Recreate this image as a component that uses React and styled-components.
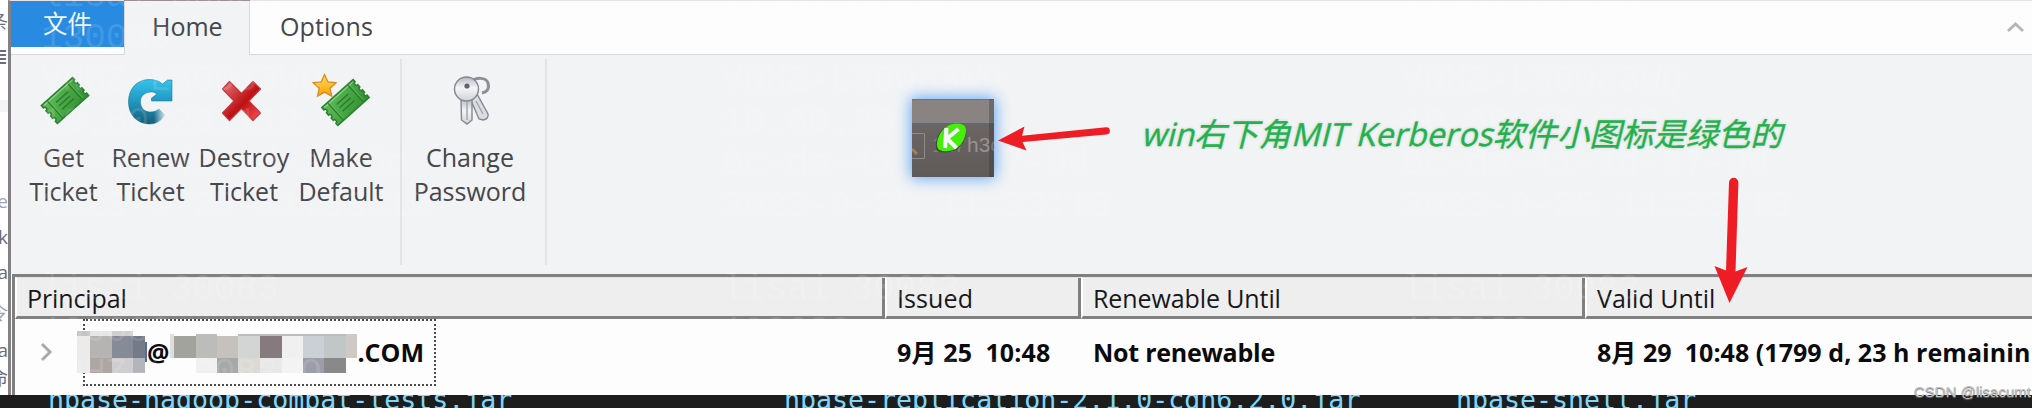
import React from "react";
import styled, { createGlobalStyle, ThemeProvider } from "styled-components";

const theme = {
  font: {
    ui: '"Open Sans", "Noto Sans CJK SC", sans-serif',
    mono: '"DejaVu Sans Mono", monospace',
  },
  colors: {
    ribbon: "#f2f3f5",
    line: "#d6d8db",
    accent: "#298ae1",
    bevel: "#808080",
    header: "#eeeeee",
    text: "#46464c",
    ink: "#17171c",
    red: "#ee1c25",
    green: "#22b14c",
  },
};

const GlobalStyle = createGlobalStyle`
  * {
    box-sizing: border-box;
  }

  body {
    margin: 0;
    overflow: hidden;
    background: #ffffff;
  }
`;

const Screen = styled.div`
  position: relative;
  display: flex;
  flex-direction: column;
  width: 2032px;
  height: 408px;
  overflow: hidden;
  font-family: ${(p) => p.theme.font.ui};
`;

const Desktop = styled.div`
  display: flex;
  height: 395px;
`;

const Strip = styled.div`
  width: 8px;
  height: 395px;
  overflow: hidden;
  background: linear-gradient(#fff 100px, #f3f4f7 100px 112px, #fff 112px);
`;

const StripText = styled.div`
  display: flex;
  justify-content: flex-end;
  height: ${(p) => p.$height}px;
  line-height: ${(p) => p.$height}px;
  font-size: 19px;
  color: ${(p) => p.$color || "#6d6a7c"};
`;

const Window = styled.div`
  flex: 1;
  min-width: 0;
  border-left: 3px solid #858081;
  border-top: 1px solid #eae1e3;
`;

const TabBar = styled.div`
  display: flex;
  height: 54px;
  background: #fdfdfd;
`;

const FileTab = styled.div`
  width: 113px;
  border-bottom: 1px solid ${(p) => p.theme.colors.line};

  span {
    display: block;
    height: 46px;
    line-height: 45px;
    padding-left: 32px;
    font-size: 24.5px;
    color: #eef6fd;
    background: ${(p) => p.theme.colors.accent};
  }
`;

const Tab = styled.div`
  width: ${(p) => p.$width}px;
  padding-left: ${(p) => p.$indent}px;
  line-height: 51px;
  font-size: 25px;
  letter-spacing: ${(p) => p.$spacing || 0}px;
  color: ${(p) => p.theme.colors.text};
  border: 1px solid ${(p) => p.theme.colors.line};
  border-width: ${(p) => (p.$active ? "0 1px" : "0 0 1px")};
  background: ${(p) => (p.$active ? p.theme.colors.ribbon : "transparent")};
  box-shadow: ${(p) => (p.$active ? "0 -1px #9a9193" : "none")};
`;

const TabFill = styled.div`
  display: flex;
  flex: 1;
  justify-content: flex-end;
  padding: 20px 6px 0 0;
  border-bottom: 1px solid ${(p) => p.theme.colors.line};
`;

const Ribbon = styled.div`
  display: flex;
  height: 219px;
  padding: 4px 0 9px;
  background: ${(p) => p.theme.colors.ribbon};
`;

const Group = styled.div`
  display: flex;
  width: ${(p) => p.$width}px;
  padding-left: ${(p) => p.$indent}px;
  border-right: 2px solid #e2e3e6;
`;

const Button = styled.div`
  display: flex;
  flex-direction: column;
  align-items: center;
  width: ${(p) => p.$width}px;
  padding-top: 11px;
`;

const ButtonLabel = styled.div`
  margin-top: 10px;
  line-height: 34px;
  font-size: 25px;
  text-align: center;
  white-space: pre;
  color: ${(p) => p.theme.colors.text};
`;

const List = styled.div`
  height: 121px;
  margin-left: 1px;
  border-left: 3px solid ${(p) => p.theme.colors.bevel};
  border-top: 3px solid ${(p) => p.theme.colors.bevel};
  background: #fdfdfd;
`;

const Columns = styled.div`
  display: grid;
  grid-template-columns: 870px 196px 504px 1fr;
`;

const HeaderCell = styled.div`
  height: 42px;
  padding-left: 10px;
  line-height: 41px;
  font-size: 25px;
  letter-spacing: ${(p) => p.$spacing || 0}px;
  white-space: nowrap;
  color: ${(p) => p.theme.colors.ink};
  background: ${(p) => p.theme.colors.header};
  border-top: 1px solid #e2e2e2;
  border-left: 2px solid #fff;
  border-bottom: 3px solid ${(p) => p.theme.colors.bevel};
  box-shadow: inset -3px 0 ${(p) => p.theme.colors.bevel};

  &:nth-child(4) {
    box-shadow: none;
  }
`;

const Cell = styled.div`
  display: flex;
  align-items: flex-start;
  height: 76px;
  min-width: 0;
  padding-left: ${(p) => p.$indent || 12}px;
  line-height: 67px;
  font-size: 25px;
  font-weight: 700;
  letter-spacing: ${(p) => p.$spacing || 0}px;
  white-space: pre;
  overflow: hidden;
  color: #0b0b0d;
`;

const Focus = styled.div`
  display: flex;
  width: 353px;
  height: 67px;
  margin-left: 29px;
  line-height: 62px;
  border: 2px dotted #4a4a4a;
`;

const Censored = styled.svg`
  flex: none;
  margin: 10px 0 0 ${(p) => p.$offset}px;
`;

const Terminal = styled.div`
  display: grid;
  grid-template-columns: 736px 672px 1fr;
  height: 13px;
  padding-left: 48px;
  overflow: hidden;
  line-height: 30px;
  font-family: ${(p) => p.theme.font.mono};
  font-size: 26.6px;
  color: #7fd6fb;
  background: #1d1d1d;

  span {
    margin-top: -10px;
  }
`;

const Ghost = styled.div`
  position: absolute;
  left: ${(p) => p.$left}px;
  top: -24px;
  font-family: "Liberation Mono", monospace;
  font-size: 36px;
  line-height: 41.9px;
  white-space: pre;
  color: rgba(255, 255, 255, 0.13);
`;

const Tray = styled.div`
  position: absolute;
  left: 912px;
  top: 99px;
  width: 82px;
  height: 78px;
  box-shadow: 0 0 14px 1px #5ba3f5;

  svg {
    display: block;
  }
`;

const Note = styled.div`
  position: absolute;
  left: 1144px;
  top: 111px;
  line-height: 46px;
  font-size: 32px;
  letter-spacing: 0.2px;
  white-space: nowrap;
  color: ${(p) => p.theme.colors.green};
  -webkit-text-stroke: 0.4px ${(p) => p.theme.colors.green};
  text-shadow: 0 0 2px #fff, 0 0 3px #b4bab4;
  transform: skewX(-14deg);
`;

const Arrows = styled.svg`
  position: absolute;
  left: 0;
  top: 0;
  fill: ${(p) => p.theme.colors.red};
`;

const Credit = styled.div`
  position: absolute;
  left: 1914px;
  top: 381px;
  line-height: 22px;
  font-family: "Liberation Sans", sans-serif;
  font-size: 15px;
  white-space: nowrap;
  color: #c4c4c4;
  text-shadow: 0 1px 1px #666;
`;

const TicketShape = () => (
  <g transform="rotate(-42)">
    <path
      d="M-21-12H21V-9a2 2 0 0 0 0 4V-2a2 2 0 0 0 0 4V5a2 2 0 0 0 0 4V12H-21V9a2 2 0 0 0 0-4V2a2 2 0 0 0 0-4V-5a2 2 0 0 0 0-4Z"
      fill="url(#ticket)"
      stroke="#2c8133"
      strokeWidth="1.6"
    />
    <path d="M-19-10.3H19" stroke="#8fd387" strokeWidth="1.2" />
    <path d="M-13.5-11V11M13.5-11V11" stroke="#267b2b" strokeWidth="1.1" />
    <path d="M-12-10V10M15-10V10" stroke="#6cbc65" strokeWidth="0.7" />
    <path d="M-8-4.5H8M-8 0H7M-8 4.5H8" stroke="#2a7a31" strokeWidth="1.4" />
  </g>
);

const TicketIcon = ({ star }) => (
  <svg width="60" height="60" viewBox="0 0 60 60" fill="none">
    <defs>
      <linearGradient id="ticket" x1="0" y1="0" x2="1" y2="1">
        <stop offset="0" stopColor="#62bb58" />
        <stop offset="0.5" stopColor="#48a843" />
        <stop offset="1" stopColor="#2f8f31" />
      </linearGradient>
      <linearGradient id="star" x1="0" y1="0" x2="0" y2="1">
        <stop offset="0" stopColor="#ffdc55" />
        <stop offset="1" stopColor="#f9a10d" />
      </linearGradient>
    </defs>
    <g transform={star ? "translate(34.5 32.5)" : "translate(31 30.5)"}>
      <TicketShape />
    </g>
    {star && (
      <path
        d="M13.5 4.5 17 12l8 .8-6 5.5 1.8 7.9-7.3-4.1-7 4.1 1.7-7.9-6-5.5 8-.8Z"
        fill="url(#star)"
        stroke="#d58a20"
        strokeWidth="1.3"
      />
    )}
  </svg>
);

const RenewIcon = () => (
  <svg width="60" height="60" viewBox="0 0 60 60">
    <defs>
      <linearGradient id="renew" x1="0" y1="0" x2="0" y2="1">
        <stop offset="0" stopColor="#35c4ed" />
        <stop offset="0.5" stopColor="#2196c0" />
        <stop offset="1" stopColor="#155f78" />
      </linearGradient>
      <linearGradient id="fade" x1="33" y1="0" x2="45" y2="0" gradientUnits="userSpaceOnUse">
        <stop offset="0" stopColor="#f2f3f5" stopOpacity="0" />
        <stop offset="1" stopColor="#f2f3f5" stopOpacity="0.95" />
      </linearGradient>
    </defs>
    <path
      d="M51 10V31H30.5V28L36 24C33 21.500 29.500 21.500 26.500 22.500C21 24.500 19 28 19.500 33C20 38.500 24 42 29 42C33 42 35.500 41 38 39L44 45C40 51 35 54 28.500 54C16 54 7.500 44.500 7.500 32C7.500 18.500 16 9.500 28.500 9.500C33.500 9.500 38 11 41.500 14L46.500 10Z"
      fill="url(#renew)"
      stroke="#1a7592"
      strokeOpacity="0.55"
      strokeWidth="1"
    />
    <path d="M33 36H47V56H33Z" fill="url(#fade)" />
  </svg>
);

const DestroyIcon = () => (
  <svg width="60" height="60" viewBox="0 0 60 60">
    <defs>
      <linearGradient id="destroy" x1="0" y1="0" x2="1" y2="1">
        <stop offset="0" stopColor="#e4777b" />
        <stop offset="0.35" stopColor="#cd3639" />
        <stop offset="0.55" stopColor="#bd1014" />
        <stop offset="1" stopColor="#fa5558" />
      </linearGradient>
    </defs>
    <path
      d="M15.500 11.500 27.500 23.500 39 11.500 46.500 19 35 31 46.500 43 39 50.500 27.500 38.500 15.500 50.500 8.500 43 20 31 8.500 19Z"
      fill="url(#destroy)"
      stroke="#c4383c"
      strokeWidth="1.2"
      strokeLinejoin="round"
    />
  </svg>
);

const KeysIcon = () => (
  <svg width="60" height="60" viewBox="0 0 60 60">
    <defs>
      <linearGradient id="steel" x1="0" y1="0" x2="0" y2="1">
        <stop offset="0" stopColor="#b4b9c0" />
        <stop offset="0.45" stopColor="#f4f5f6" />
        <stop offset="1" stopColor="#d2d3d5" />
      </linearGradient>
    </defs>
    <path
      d="M31 12C36 7 46 7 48 13C50 20 46 22 42 23"
      fill="none"
      stroke="#8d9097"
      strokeWidth="3"
    />
    <path
      d="M30 28 37 24 48 44Q49 49 43 50L39 49Z"
      fill="#dcdde0"
      stroke="#85888e"
      strokeWidth="1.400"
    />
    <path
      d="M21 29H32V50L27 54 21.500 50Z"
      fill="url(#steel)"
      stroke="#85888e"
      strokeWidth="1.400"
    />
    <path d="M27 32V50M36 31 43 44" stroke="#a6a8ac" strokeWidth="1.500" />
    <circle cx="26.500" cy="19" r="12" fill="url(#steel)" stroke="#85888e" strokeWidth="1.400" />
    <circle cx="27" cy="16" r="2.600" fill="#5f636a" />
  </svg>
);

const buttons = [
  { label: "Get\nTicket", width: 87, icon: <TicketIcon /> },
  { label: "Renew\nTicket", width: 87, icon: <RenewIcon /> },
  { label: "Destroy\nTicket", width: 100, icon: <DestroyIcon /> },
  { label: "Make\nDefault", width: 94, icon: <TicketIcon star /> },
];

// [x, y, width, height, color]
const nameBlocks = [
  [0, 0, 13, 5, "#c4c4c4"],
  [13, 0, 22, 5, "#e6e6e6"],
  [35, 0, 21, 5, "#d0d0d0"],
  [0, 5, 13, 37, "#ebebeb"],
  [13, 5, 22, 22, "#b5b4b2"],
  [35, 5, 21, 22, "#868c97"],
  [56, 5, 12, 22, "#747a88"],
  [13, 27, 22, 15, "#aea6a3"],
  [35, 27, 21, 15, "#cfcdcf"],
  [56, 27, 12, 15, "#b3b5bd"],
  [68, 11, 1.5, 20, "#4d6f9c"],
];

const realmBlocks = [
  [0, 3, 4, 24, "#dededd"],
  [4, 5, 22, 22, "#a3a39d"],
  [26, 3, 21, 24, "#bcbcbb"],
  [47, 5, 21, 22, "#c7c1bd"],
  [68, 3, 108, 2, "#bdbdbd"],
  [68, 5, 22, 22, "#d3d5d5"],
  [90, 5, 22, 22, "#877a7e"],
  [112, 5, 21, 22, "#f0f0f0"],
  [133, 5, 21, 22, "#cbcfd6"],
  [154, 5, 22, 22, "#c1c6c7"],
  [176, 3, 11, 24, "#cfc9c6"],
  [26, 27, 21, 15, "#f0f0f0"],
  [47, 27, 21, 15, "#a5a9a8"],
  [68, 27, 22, 15, "#dbdad4"],
  [90, 27, 22, 15, "#e8e8e8"],
  [112, 27, 21, 15, "#f3f3f3"],
  [133, 27, 21, 15, "#9c9dab"],
  [154, 27, 22, 15, "#8a8889"],
];

const Mosaic = ({ blocks, width, offset }) => (
  <Censored width={width} height="42" $offset={offset} shapeRendering="crispEdges">
    {blocks.map(([x, y, w, h, color]) => (
      <rect key={`${x}-${y}`} x={x} y={y} width={w} height={h} fill={color} />
    ))}
  </Censored>
);

const TrayIcon = () => (
  <Tray>
    <svg width="82" height="78" viewBox="0 0 82 78">
      <defs>
        <linearGradient id="bar" x1="0" y1="0" x2="0" y2="1">
          <stop offset="0" stopColor="#6b6563" />
          <stop offset="1" stopColor="#5f5b5a" />
        </linearGradient>
      </defs>
      <path d="M0 0H82V24H0Z" fill="#898482" />
      <path d="M0 23H82V78H0Z" fill="url(#bar)" />
      <path d="M0 .5H82" stroke="#77716f" />
      <path d="M0 23.500H82" stroke="#7f8890" />
      <path d="M0 34.500H12.500V59.500H0" fill="none" stroke="#8e8a88" />
      <path d="M0 50 5 55" stroke="#9d8351" strokeWidth="3" />
      <text x="20" y="53" fontFamily="Liberation Sans" fontSize="20" fill="#827d7b">
        127
      </text>
      <text x="55" y="53" fontFamily="Liberation Sans" fontSize="21" fill="#979290">
        h3c
      </text>
      <path
        d="M24 48C23 37 32 25 43 24.500C50 24 54 26 54 31C55 42 47 52 37 53C29 54 24 53 24 48Z"
        fill="#3a4a35"
      />
      <path
        d="M25 46C25 36 33 25 43 24.500C50 24 54 26 54 31C54 41 47 51 37 52C29 53 25 51 25 46Z"
        fill="#45ee0b"
      />
      <path
        d="M34.500 29 33 49M46.500 30 35 39.500 44.500 49"
        fill="none"
        stroke="#f6f6f6"
        strokeWidth="4.200"
      />
      <path d="M77 0H82V78H77Z" fill="#2c2624" fillOpacity="0.28" />
    </svg>
  </Tray>
);

const ghostText = [
  "lisai 30083",
  "130083",
  "VNHZ-L30083WQ",
  "10.80.23.112",
  "0c-da-41-1d-a7-9d",
  "2023-9-25 11:33:19",
  "",
  "lisai 30083",
  "130083",
  "VNHZ-L30083WQ",
].join("\n");

const App = () => (
  <ThemeProvider theme={theme}>
    <GlobalStyle />
    <Screen>
      <Desktop>
        <Strip>
          <StripText $height={44}>条</StripText>
          <StripText $height={26}>≣</StripText>
          <StripText $height={114} />
          <StripText $height={34} $color="#a3a0b4">ke</StripText>
          <StripText $height={38}>k</StripText>
          <StripText $height={32}>da</StripText>
          <StripText $height={50} $color="#a3a0b4">令</StripText>
          <StripText $height={24}>a</StripText>
          <StripText $height={33}>命</StripText>
        </Strip>
        <Window>
          <TabBar>
            <FileTab>
              <span>文件</span>
            </FileTab>
            <Tab $active $width={126} $indent={27}>Home</Tab>
            <Tab $width={150} $indent={30} $spacing={0.1}>Options</Tab>
            <TabFill>
              <svg width="20" height="14" viewBox="0 0 20 14">
                <path d="M2 10 9.500 3 17 10" fill="none" stroke="#b5b5b5" strokeWidth="2.800" />
              </svg>
            </TabFill>
          </TabBar>
          <Ribbon>
            <Group $width={391} $indent={9}>
              {buttons.map((button) => (
                <Button key={button.label} $width={button.width}>
                  {button.icon}
                  <ButtonLabel>{button.label}</ButtonLabel>
                </Button>
              ))}
            </Group>
            <Group $width={145} $indent={0}>
              <Button $width={136}>
                <KeysIcon />
                <ButtonLabel>{"Change\nPassword"}</ButtonLabel>
              </Button>
            </Group>
          </Ribbon>
          <List>
            <Columns>
              <HeaderCell $spacing={-0.1}>Principal</HeaderCell>
              <HeaderCell $spacing={0.1}>Issued</HeaderCell>
              <HeaderCell $spacing={-0.1}>Renewable Until</HeaderCell>
              <HeaderCell>Valid Until</HeaderCell>
              <Cell $indent={25}>
                <svg width="14" height="67" viewBox="0 0 14 67">
                  <path d="M2 25 10 33 2 41" fill="none" stroke="#a9a9a9" strokeWidth="3" />
                </svg>
                <Focus>
                  <Mosaic blocks={nameBlocks} width={70} offset={-8} />
                  <span>@</span>
                  <Mosaic blocks={realmBlocks} width={187} offset={1} />
                  <span>.COM</span>
                </Focus>
              </Cell>
              <Cell $spacing={0.15}>{"9月 25  10:48"}</Cell>
              <Cell $spacing={-0.25}>Not renewable</Cell>
              <Cell $spacing={0.05}>{"8月 29  10:48 (1799 d, 23 h remainin"}</Cell>
            </Columns>
          </List>
        </Window>
      </Desktop>
      <Terminal>
        <span>hbase-hadoop-compat-tests.jar</span>
        <span>hbase-replication-2.1.0-cdh6.2.0.jar</span>
        <span>hbase-shell.jar</span>
      </Terminal>
      <Ghost $left={41}>{ghostText}</Ghost>
      <Ghost $left={722}>{ghostText}</Ghost>
      <Ghost $left={1402}>{ghostText}</Ghost>
      <TrayIcon />
      <Note>win右下角MIT Kerberos软件小图标是绿色的</Note>
      <Arrows width="2032" height="408">
        <path d="M998 140.500 1024.500 126.500 1022 135.800 1106 127.300A3.600 3.600 0 0 1 1106.500 134.500L1022.500 142 1026.500 150.500Z" />
        <path d="M1729.500 303 1714.500 266 1726 270.500 1729 182.500A4.700 4.700 0 0 1 1738.400 182.500L1735.500 271.500 1747.500 267Z" />
      </Arrows>
      <Credit>CSDN @lisacumt</Credit>
    </Screen>
  </ThemeProvider>
);

export default App;
